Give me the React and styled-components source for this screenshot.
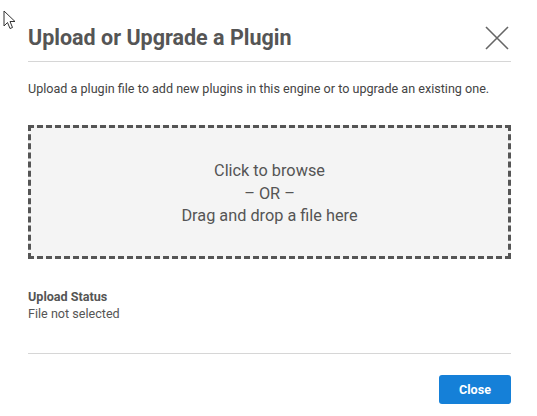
import React from 'react';
import styled, { createGlobalStyle } from 'styled-components';

const GlobalStyle = createGlobalStyle`
  html, body {
    margin: 0;
    padding: 0;
    background: #ffffff;
    font-family: Roboto, "Liberation Sans", Arial, sans-serif;
  }
`;

const Page = styled.div`
  position: relative;
  width: 537px;
  height: 416px;
  overflow: hidden;
  background: #ffffff;
`;

const Cursor = styled.svg`
  position: absolute;
  left: 3px;
  top: 10px;
`;

const Modal = styled.div`
  padding: 0 26px 0 28px;
  display: flex;
  flex-direction: column;
`;

const Header = styled.div`
  display: flex;
  align-items: center;
  justify-content: space-between;
  height: 62px;
  padding-top: 14px;
  box-sizing: border-box;
  border-bottom: 1px solid #d6d6d6;
`;

const Title = styled.h1`
  margin: 0;
  font-size: 21.5px;
  font-weight: 700;
  color: #555555;
`;

const CloseIcon = styled.button`
  border: none;
  background: none;
  padding: 0;
  margin-right: 2px;
  width: 24px;
  height: 24px;
  display: flex;
  cursor: pointer;
`;

const Description = styled.p`
  margin: 19px 0 0;
  font-size: 12.6px;
  color: #444444;
`;

const DropZone = styled.div`
  margin-top: 29px;
  height: 134px;
  padding-top: 4px;
  box-sizing: border-box;
  border: 3px dashed #555555;
  background: #f4f4f4;
  display: flex;
  flex-direction: column;
  align-items: center;
  justify-content: center;
  font-size: 16.3px;
  line-height: 22.5px;
  color: #555555;
  cursor: pointer;
`;

const Status = styled.div`
  margin-top: 29px;
  font-size: 12.6px;
  line-height: 17px;
  color: #555555;
  padding-bottom: 31px;
  border-bottom: 1px solid #d6d6d6;
`;

const StatusLabel = styled.div`
  font-weight: 700;
`;

const Footer = styled.div`
  display: flex;
  justify-content: flex-end;
  padding-top: 21px;
`;

const Button = styled.button`
  width: 72px;
  height: 29px;
  border: none;
  border-radius: 3px;
  background: ${p => (p.primary ? '#1580d8' : '#eeeeee')};
  color: ${p => (p.primary ? '#ffffff' : '#333333')};
  font-family: inherit;
  font-size: 12.6px;
  font-weight: 700;
  cursor: pointer;
`;

export default function App() {
  return (
    <Page>
      <GlobalStyle />
      <Cursor width="14" height="20" viewBox="0 0 14 20">
        <path d="M1 1 L1 16 L4.5 12.5 L7 18.5 L9.5 17.5 L7 11.5 L12 11.5 Z" fill="#fff" stroke="#333" strokeWidth="1" />
      </Cursor>
      <Modal>
        <Header>
          <Title>Upload or Upgrade a Plugin</Title>
          <CloseIcon aria-label="close">
            <svg width="24" height="24" viewBox="0 0 24 24">
              <path d="M1 1 L23 23 M23 1 L1 23" stroke="#666" strokeWidth="1.6" />
            </svg>
          </CloseIcon>
        </Header>
        <Description>
          Upload a plugin file to add new plugins in this engine or to upgrade an existing one.
        </Description>
        <DropZone>
          <div>Click to browse</div>
          <div>– OR –</div>
          <div>Drag and drop a file here</div>
        </DropZone>
        <Status>
          <StatusLabel>Upload Status</StatusLabel>
          <div>File not selected</div>
        </Status>
        <Footer>
          <Button primary>Close</Button>
        </Footer>
      </Modal>
    </Page>
  );
}
